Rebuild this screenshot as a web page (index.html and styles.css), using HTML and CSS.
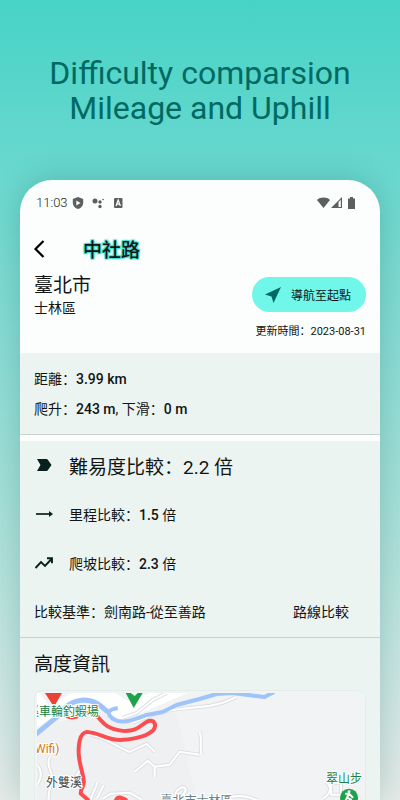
FILE: index.html
```html
<!DOCTYPE html>
<html lang="zh">

<head>
    <meta charset="utf-8">
    <meta name="viewport" content="width=device-width, initial-scale=1">
    <title>中社路</title>
    <link rel="stylesheet" href="styles.css">
</head>

<body>
    <h1 class="headline">Difficulty comparsion<br>Mileage and Uphill</h1>

    <main class="phone">
        <div class="statusBar">
            <span class="clock">11:03</span>
            <svg class="statusIcon" viewBox="0 0 12 12">
                <path fill="#5c5f5f" d="M6 0l5.200 2v4c0 3-2.200 5.200-5.200 6C3 11.200.8 9 .8 6V2z" />
                <path fill="#fbfefd" d="M4.300 3.500v5L8.500 6z" />
            </svg>
            <svg class="statusIcon" viewBox="0 0 12 12" fill="#5c5f5f">
                <circle cx="3" cy="4" r="2.500" />
                <circle cx="8" cy="5" r="1.700" />
                <circle cx="8" cy="9.500" r="1.700" />
                <circle cx="11" cy="2.500" r=".8" />
            </svg>
            <svg class="statusIcon" viewBox="0 0 12 12">
                <rect x="2" y="1" width="8.500" height="10" rx="1" fill="#5c5f5f" />
                <path fill="none" stroke="#fbfefd" stroke-width="1.200" d="M4 9l2.200-6 2.200 6M5 7.200h2.600" />
            </svg>
            <span class="spacer"></span>
            <svg class="signals" viewBox="0 0 40 12" fill="#5c5f5f">
                <path d="M0 3C3.500-.2 9.500-.2 13 3L6.500 11z" />
                <path d="M14 11L25 0v11z" />
                <path fill="#fbfefd" d="M21.500 5l2.300-2.300V10h-2.300z" />
                <path d="M31 1.500h2V0h3v1.500h2V12h-7z" />
            </svg>
        </div>

        <header class="topBar">
            <button class="back" aria-label="返回">
                <svg width="24" height="24" viewBox="0 0 24 24" fill="none" stroke="#000" stroke-width="2.200">
                    <path d="M16.500 4L8.500 12l8 8" />
                </svg>
            </button>
            <h2 class="routeName">中社路</h2>
        </header>

        <section class="place">
            <div>
                <div class="city">臺北市</div>
                <div class="district">士林區</div>
            </div>
            <div class="placeSide">
                <button class="navigate">
                    <svg width="18" height="18" viewBox="0 0 18 18" fill="#006a62">
                        <path d="M17 1L1 8.500l6.500 2L9.500 17z" />
                    </svg>
                    導航至起點
                </button>
                <div class="updated">更新時間：2023-08-31</div>
            </div>
        </section>

        <section class="stats">
            <div>距離：<b>3.99 km</b></div>
            <div>爬升：<b>243 m</b>, 下滑：<b>0 m</b></div>
        </section>

        <section class="compare">
            <div class="row rowMain">
                <svg class="rowIcon" viewBox="0 0 20 20" fill="#06201d">
                    <path d="M3 4h9c1 0 1.500.3 2 1l3.500 5-3.500 5c-.5.7-1 1-2 1H3l3.500-6z" />
                </svg>
                難易度比較：2.2 倍
            </div>
            <div class="row">
                <svg class="rowIcon" viewBox="0 0 20 20">
                    <path fill="none" stroke="#06201d" stroke-width="1.700" d="M2 10h14" />
                    <path fill="#06201d" d="M15 7l4 3-4 3z" />
                </svg>
                <span>里程比較：<b>1.5</b> 倍</span>
            </div>
            <div class="row">
                <svg class="rowIcon" viewBox="0 0 20 20" fill="none" stroke="#06201d" stroke-width="1.900">
                    <path d="M1.500 15l5.500-6 4 4L18 5.500M13 5.200h5v5" />
                </svg>
                <span>爬坡比較：<b>2.3</b> 倍</span>
            </div>
            <div class="basis">
                <span>比較基準：劍南路-從至善路</span>
                <button class="textButton">路線比較</button>
            </div>
        </section>

        <section class="elevation">
            <h3 class="sectionTitle">高度資訊</h3>
            <div class="mapCard">
                <svg class="map" viewBox="0 0 329 120">
                    <defs>
                        <path id="lanes" d="M86 25l14-5L116 7 130 0M96 30l20-8c14-6 30-6 47-8 18-1 28-6 37-10M53 42c18 3 26 12 40 17l17-8 8 8M98 79l13-11 7 6 15-2 10-13 20 3M118 74v11M13 64c-5 9 4 16 2 25-2 8-5 12-3 20M0 72c5 6 5 13 0 20M61 89l-9 22M67 92l-7 14M45 74l-7 12M66 106l8-5 19-1 12 7M138 102c4-9 12-9 11-4l-4 7M163 39c3 7 0 15 2 23M196 104c10-2 18 1 26 4M290 89c6 5 5 12-3 17M295 90h10v12h-10z" />
                    </defs>
                    <rect width="329" height="120" fill="#f1f3f4" />
                    <path fill="#ebedf0" d="M0 38L50 20l90 0 23 100H0z" opacity=".5" />
                    <!-- main road along the river -->
                    <path fill="#fff" d="M0 0h3l9 13L35 0h43l14 8L113 0h38l-46 20-19 8-15-9L50 4 0 34z" />
                    <!-- small roads -->
                    <use href="#lanes" class="laneEdge" />
                    <use href="#lanes" class="laneFill" />
                    <!-- river -->
                    <g fill="none" stroke="#9fc3fb" stroke-linejoin="round">
                        <path stroke-width="5" d="M-2 42L20 24C28 14 34 8 46 7c12 0 17 5 25 12" />
                        <path stroke-width="4" d="M81 15c-12 2-11 7-3 12 8 4 18 0 32-5l16-3 14-7 23-6 17-5 16-1 32 4 10-5" />
                    </g>
                    <!-- recorded route -->
                    <path class="route" d="M30 23c5 3 9 1 14-1 7-3 13-3 17 2 7 8 10 12 25 14 16 1 18-7 26-10 6-1 8 4 5 9-5 5-17 9-31 10-16 1-22-7-36-8-7 1-9 12-8 24 1 11 4 16 5 26 0 6-4 8-3 12l7 6M79 108c2-5 6-3 10-1" />
                    <path fill="#ea4335" d="M8 0h17l-8 14z" />
                    <path fill="#1fa34a" d="M89 0h17l-9 15z" />
                    <path fill="#fff" d="M94 0h7l-3 3z" />
                    <text class="mapLabel mapGreen" x="-10" y="23">溪車輪釣蝦場</text>
                    <text class="mapLabel mapOrange" x="-2" y="60">Wifi)</text>
                    <text class="mapLabel mapDark" x="9" y="94">外雙溪</text>
                    <text class="mapLabel mapGrey" x="124" y="112">臺北市士林區</text>
                    <text class="mapLabel mapGreen" x="290" y="90">翠山步</text>
                    <circle cx="313" cy="105" r="9" fill="#1fa34a" />
                    <circle cx="313" cy="99" r="1.500" fill="#fff" />
                    <path fill="none" stroke="#fff" stroke-width="2" d="M313 101l-2 4 4 2v5M311 105l-3 6M309 101l4 0 4 4" />
                </svg>
            </div>
        </section>
    </main>
</body>

</html>
```
FILE: styles.css
```css
* {
    box-sizing: border-box;
}

body {
    margin: 0;
    height: 100vh;
    overflow: hidden;
    display: flex;
    flex-direction: column;
    background: linear-gradient(#47d3c6, #6fd9d0 25%, #a5e0d9 62%, #e6ebe9);
    font-family: Roboto, "Noto Sans CJK SC", sans-serif;
    font-size: 14px;
    color: #111514;
}

h1, h2, h3 {
    margin: 0;
    font-weight: 400;
}

b {
    font-weight: 500;
}

button {
    border: 0;
    padding: 0;
    background: none;
    font: inherit;
    color: inherit;
    cursor: pointer;
}

svg {
    display: block;
    flex: none;
}

.headline {
    padding: 56px 0 54px;
    font-size: 32px;
    line-height: 35px;
    text-align: center;
    color: #006a62;
}

.phone {
    flex: 1;
    min-height: 0;
    margin: 0 20px;
    overflow: hidden;
    border-radius: 32px 32px 0 0;
    background: #fbfefd;
    box-shadow: 0 0 32px rgba(0, 80, 70, .24);
}

.statusBar {
    display: flex;
    align-items: center;
    gap: 8px;
    height: 45px;
    padding: 0 23px 0 16px;
}

.clock {
    margin-right: -4px;
    font-size: 13px;
    font-weight: 300;
    color: #222625;
}

.statusIcon {
    width: 12px;
    height: 12px;
}

.spacer {
    flex: 1;
}

.signals {
    width: 40px;
    height: 12px;
}

.topBar {
    display: flex;
    align-items: center;
    gap: 32px;
    height: 48px;
    padding-left: 7px;
}

.routeName {
    padding-bottom: 2px;
    font-size: 19px;
    font-weight: 500;
    text-shadow: 0 0 2px #40e0d0, 1px 1px 1px #40e0d0, -1px -1px 1px #40e0d0, 1px -1px 1px #40e0d0, -1px 1px 1px #40e0d0;
}

.place {
    display: flex;
    justify-content: space-between;
    height: 80px;
    padding: 0 14px;
}

.city {
    font-size: 19px;
    line-height: 26px;
}

.district {
    line-height: 18px;
}

.placeSide {
    padding-top: 4px;
    text-align: right;
}

.navigate {
    display: flex;
    align-items: center;
    gap: 9px;
    height: 35px;
    margin-left: auto;
    padding: 0 15px 0 12px;
    border-radius: 18px;
    background: #70f7e9;
    font-size: 12px;
}

.updated {
    margin-top: 12px;
    font-size: 11px;
    line-height: 16px;
}

.stats {
    padding: 11px 14px 10px;
    border-bottom: 1px solid #ccd0cf;
    background: #ecf4f2;
    line-height: 30px;
}

.compare {
    margin-top: 6px;
    padding-left: 14px;
    border-bottom: 1px solid #ccd0cf;
    background: #ecf4f2;
}

.row {
    display: flex;
    align-items: center;
    gap: 15px;
    height: 49px;
}

.rowMain {
    height: 48px;
    font-size: 19px;
}

.rowIcon {
    width: 20px;
    height: 20px;
}

.basis {
    display: flex;
    align-items: center;
    justify-content: space-between;
    height: 50px;
    padding: 0 31px 2px 0;
}

.elevation {
    padding: 12px 14px 0;
    background: #ecf4f2;
}

.sectionTitle {
    font-size: 19px;
    line-height: 30px;
}

.mapCard {
    margin-top: 10px;
    padding: 2px 0 0 2px;
    border: 1px solid #e5ecea;
    border-radius: 8px 8px 0 0;
    background: #eef5f3;
}

.map {
    width: 100%;
}

.laneEdge {
    fill: none;
    stroke: #dddfe3;
    stroke-width: 4px;
}

.laneFill {
    fill: none;
    stroke: #fff;
    stroke-width: 2px;
}

.route {
    fill: none;
    stroke: #fb4d50;
    stroke-width: 4px;
    stroke-linecap: round;
}

.mapLabel {
    font-size: 12px;
    paint-order: stroke;
    stroke: #fff;
    stroke-width: 2px;
}

.mapGreen {
    fill: #168442;
}

.mapOrange {
    fill: #d27a10;
}

.mapDark {
    fill: #42474c;
}

.mapGrey {
    fill: #6b7f8a;
}
```
